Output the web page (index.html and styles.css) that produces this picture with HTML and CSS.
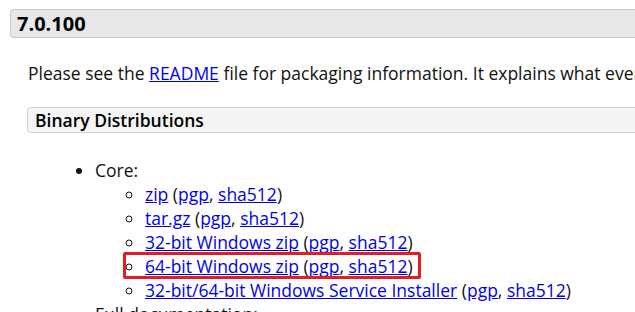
FILE: index.html
```html
<!DOCTYPE html>
<html>
<head>
<meta charset="utf-8">
<link rel="stylesheet" href="styles.css">
</head>
<body>
<div class="page">
  <h2 class="release">7.0.100</h2>
  <div class="release-body">
    <p class="intro">Please see the <a href="#">README</a> file for packaging information. It explains what every distribution contains.</p>
    <h3 class="section">Binary Distributions</h3>
    <ul class="dists">
      <li>Core:
        <ul class="files">
          <li><a href="#">zip</a> (<a href="#">pgp</a>, <a href="#">sha512</a>)</li>
          <li><a href="#">tar.gz</a> (<a href="#">pgp</a>, <a href="#">sha512</a>)</li>
          <li><a href="#">32-bit Windows zip</a> (<a href="#">pgp</a>, <a href="#">sha512</a>)</li>
          <li class="marked"><span class="mark"></span><a href="#">64-bit Windows zip</a> (<a href="#">pgp</a>, <a href="#">sha512</a>)</li>
          <li><a href="#">32-bit/64-bit Windows Service Installer</a> (<a href="#">pgp</a>, <a href="#">sha512</a>)</li>
        </ul>
      </li>
      <li>Full documentation:</li>
    </ul>
  </div>
</div>
</body>
</html>
```
FILE: styles.css
```css
html, body {
  margin: 0;
  padding: 0;
  background: #fff;
}
body {
  font-family: "Open Sans", "Liberation Sans", sans-serif;
  font-size: 17.5px;
  color: #111;
  overflow: hidden;
}
.page {
  padding: 9px 0 0 10px;
}
.release {
  margin: 0;
  width: 700px;
  height: 27px;
  line-height: 27px;
  background: #e8e8e8;
  border: 1px solid #c8c8c8;
  border-radius: 4px;
  font-size: 20px;
  font-weight: 700;
  padding-left: 6px;
  color: #000;
}
.release-body {
  padding-left: 17px;
}
.intro {
  margin: 0;
  padding-top: 23px;
  line-height: 24px;
  white-space: nowrap;
  padding-left: 1px;
}
a {
  color: #0000ee;
}
.section {
  margin: 22px 0 0 0;
  width: 700px;
  height: 24px;
  line-height: 24px;
  background: #f4f4f4;
  border: 1px solid #cfcfcf;
  border-radius: 4px;
  font-size: 17.5px;
  font-weight: 600;
  padding-left: 7px;
  color: #000;
}
.dists {
  margin: 25px 0 0 0;
  padding-left: 68px;
  line-height: 24px;
  white-space: nowrap;
}
.files {
  margin: 0;
  padding-left: 50px;
  list-style-type: circle;
}
.marked {
  position: relative;
}
.mark {
  position: absolute;
  left: -22px;
  top: -2px;
  width: 292px;
  height: 21px;
  border: 3.5px solid #e51c23;
  border-radius: 2px;
}
```
